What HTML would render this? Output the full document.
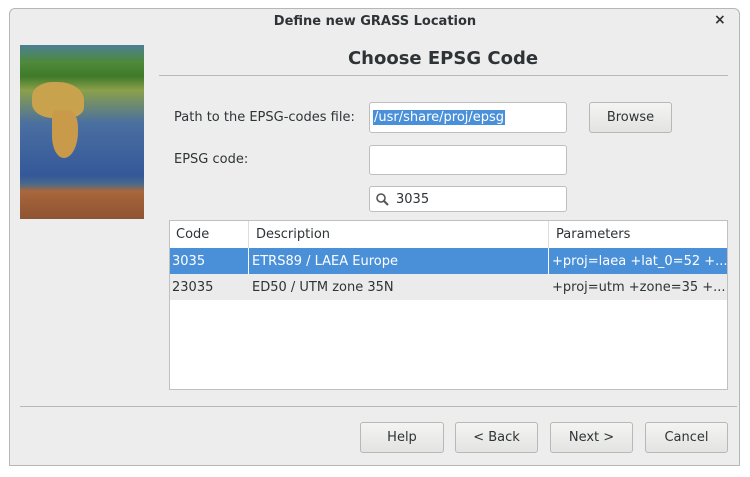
<!DOCTYPE html><html><head><style>
body{margin:0;width:750px;height:477px;background:#fff;font-family:"DejaVu Sans","Liberation Sans",sans-serif;font-size:13px;color:#2e3436;position:relative;overflow:hidden}
.win{position:absolute;left:9px;top:8px;width:731px;height:458px;background:#ededed;border:1px solid #b6b6b3;border-radius:6px 6px 0 0;box-sizing:border-box}
.a{position:absolute;white-space:nowrap}
.inp{position:absolute;background:#fff;border:1px solid #bebebe;border-radius:3px;box-sizing:border-box}
.btn{position:absolute;top:422px;height:31px;border:1px solid #b8b8b4;border-radius:3px;background:linear-gradient(#f4f4f3,#e3e3e1);box-sizing:border-box;text-align:center;line-height:29px}
</style></head><body>
<div class="win"></div>
<div class="a" style="left:0;width:750px;top:14px;text-align:center;font-weight:bold;font-size:13px">Define new GRASS Location</div>
<div class="a" style="left:714px;top:12px;font-size:14px;font-weight:bold">×</div>
<div class="a" style="left:20px;top:45px;width:124px;height:174px;background:linear-gradient(180deg,#4b7f95 0%,#4f8a3a 10%,#3f7a2a 18%,#8aa04a 26%,#4a6fa0 45%,#35589a 75%,#4a6a8a 80%,#a8673c 84%,#8e5333 100%)"></div>
<div class="a" style="left:32px;top:82px;width:52px;height:36px;background:#c9a24e;border-radius:40% 50% 30% 40%"></div>
<div class="a" style="left:52px;top:110px;width:26px;height:48px;background:#c99a4a;border-radius:20% 40% 60% 50%"></div>
<div class="a" style="left:0;width:886px;top:48px;text-align:center;font-weight:bold;font-size:18px">Choose EPSG Code</div>
<div class="a" style="left:159px;top:75px;width:569px;height:1px;background:#b8b8b8"></div>
<div class="a" style="left:174px;top:110px">Path to the EPSG-codes file:</div>
<div class="inp" style="left:369px;top:102px;width:198px;height:31px"><span style="position:absolute;left:3px;top:7px;background:#4a90d9;color:#fff;padding:0 1px;white-space:nowrap">/usr/share/proj/epsg</span></div>
<div class="btn" style="left:589px;top:102px;width:83px">Browse</div>
<div class="a" style="left:174px;top:152px">EPSG code:</div>
<div class="inp" style="left:369px;top:145px;width:198px;height:30px"></div>
<div class="inp" style="left:369px;top:186px;width:198px;height:26px"><svg style="position:absolute;left:6px;top:6px" width="13" height="13"><circle cx="5" cy="5" r="4" fill="none" stroke="#555" stroke-width="1.6"/><path d="M8 8l4 4" stroke="#555" stroke-width="2"/></svg><span style="position:absolute;left:26px;top:5px">3035</span></div>
<div class="a" style="left:169px;top:220px;width:559px;height:170px;background:#fff;border:1px solid #c0c0c0;box-sizing:border-box"></div>
<div class="a" style="left:248px;top:221px;width:1px;height:27px;background:#ddd"></div>
<div class="a" style="left:548px;top:221px;width:1px;height:27px;background:#ddd"></div>
<div class="a" style="left:176px;top:227px">Code</div>
<div class="a" style="left:256px;top:227px">Description</div>
<div class="a" style="left:556px;top:227px">Parameters</div>
<div class="a" style="left:170px;top:248px;width:557px;height:26px;background:#4a90d9;color:#fff;overflow:hidden">
<span class="a" style="left:2px;top:6px">3035</span><span class="a" style="left:78px;top:0;width:1px;height:26px;background:#fff"></span><span class="a" style="left:82px;top:6px">ETRS89 / LAEA Europe</span><span class="a" style="left:378px;top:0;width:1px;height:26px;background:#fff"></span><span class="a" style="left:382px;top:6px">+proj=laea +lat_0=52 +...</span></div>
<div class="a" style="left:170px;top:274px;width:557px;height:26px;background:#ebebeb;overflow:hidden">
<span class="a" style="left:2px;top:6px">23035</span><span class="a" style="left:82px;top:6px">ED50 / UTM zone 35N</span><span class="a" style="left:382px;top:6px">+proj=utm +zone=35 +...</span></div>
<div class="a" style="left:20px;top:406px;width:717px;height:1px;background:#b8b8b8"></div>
<div class="btn" style="left:360px;width:84px">Help</div>
<div class="btn" style="left:455px;width:83px">&lt; Back</div>
<div class="btn" style="left:550px;width:83px">Next &gt;</div>
<div class="btn" style="left:645px;width:83px">Cancel</div>
</body></html>
